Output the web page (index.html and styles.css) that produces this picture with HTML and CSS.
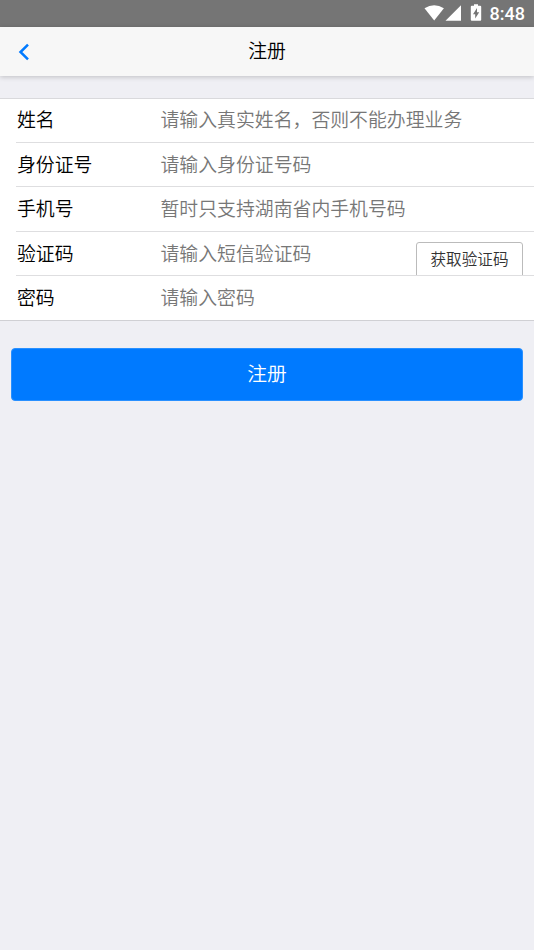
FILE: index.html
```html
<!DOCTYPE html>
<html lang="zh-CN">
<head>
<meta charset="utf-8">
<title>注册</title>
<link rel="stylesheet" href="styles.css">
</head>
<body>
<div class="status">
  <svg class="status-icons" width="60" height="27" viewBox="0 0 60 27" fill="#fff">
    <path d="M.5 8.2Q10.200 2.200 19.900 8.200L10.200 20.500Z"/>
    <path d="M37 5.200V20.800H21.500Z"/>
    <path fill-rule="evenodd" d="M50 4.300h4v1.500h2.200q1 0 1 1v13q0 1-1 1h-8.400q-1 0-1-1v-13q0-1 1-1H50ZM53 8l-4 6.200h2.200V18.600l4-6.400H53Z"/>
  </svg>
  <span class="clock">8:48</span>
</div>
<header class="bar">
  <svg class="back" width="12" height="18" viewBox="0 0 12 18"><path d="M10 1.600 2.500 9 10 16.400" fill="none" stroke="#007aff" stroke-width="2.500"/></svg>
  <h1 class="title">注册</h1>
</header>
<form class="form">
  <div class="row"><label class="label">姓名</label><span class="hint">请输入真实姓名，否则不能办理业务</span></div>
  <div class="row"><label class="label">身份证号</label><span class="hint">请输入身份证号码</span></div>
  <div class="row"><label class="label">手机号</label><span class="hint">暂时只支持湖南省内手机号码</span></div>
  <div class="row"><label class="label">验证码</label><span class="hint">请输入短信验证码</span><button type="button" class="code">获取验证码</button></div>
  <div class="row"><label class="label">密码</label><span class="hint">请输入密码</span></div>
</form>
<button type="button" class="submit">注册</button>
</body>
</html>
```
FILE: styles.css
```css
* { box-sizing: border-box; }
body {
  margin: 0;
  min-height: 950px;
  background: #efeff4;
  font-family: "Noto Sans CJK SC", sans-serif;
  font-size: 18.87px;
  font-weight: 350;
  color: #000;
}
.status {
  height: 27px;
  padding-right: 9px;
  display: flex;
  justify-content: flex-end;
  background: #757575;
}
.status-icons { margin-right: 6px; }
.clock {
  font: 500 18px/28px Roboto, sans-serif;
  color: #fff;
}
.bar {
  height: 49px;
  display: grid;
  grid-template-columns: 40px 1fr 40px;
  align-items: center;
  background: #f7f7f7;
  box-shadow: 0 1px 5px rgba(0, 0, 0, .2);
}
.back { margin-left: 18px; }
.title {
  margin: 0;
  padding-bottom: 4px;
  text-align: center;
  font-size: 18.87px;
  font-weight: 350;
  line-height: 44px;
}
.form {
  margin-top: 22px;
  background: #fff;
  border-top: 1px solid #d9d9dc;
  border-bottom: 1px solid #d0d0d4;
}
.row {
  height: 44.5px;
  margin-left: 16px;
  padding-left: 1px;
  display: flex;
  overflow: hidden;
  line-height: 42px;
  border-bottom: 1px solid #dedee0;
}
.row:first-child { height: 43.500px; line-height: 40px; }
.row:last-child { height: 44px; border-bottom: 0; }
.label { width: 143.500px; }
.hint { color: #777; flex: 1; white-space: nowrap; }
.code {
  width: 107px;
  height: 40px;
  flex: none;
  margin: 10px 11px 0 0;
  padding: 0 0 8px;
  border: 1px solid #bbb;
  border-radius: 3px;
  background: #fff;
  color: #333;
  font: 350 15.600px/30px "Noto Sans CJK SC", sans-serif;
}
.submit {
  display: block;
  width: 512px;
  height: 53px;
  margin: 27px 11px 0;
  padding: 0 0 3px;
  border: 1px solid #2990ff;
  border-radius: 4px;
  background: #007aff;
  color: #fff;
  font: 350 19.800px/46px "Noto Sans CJK SC", sans-serif;
}
```
